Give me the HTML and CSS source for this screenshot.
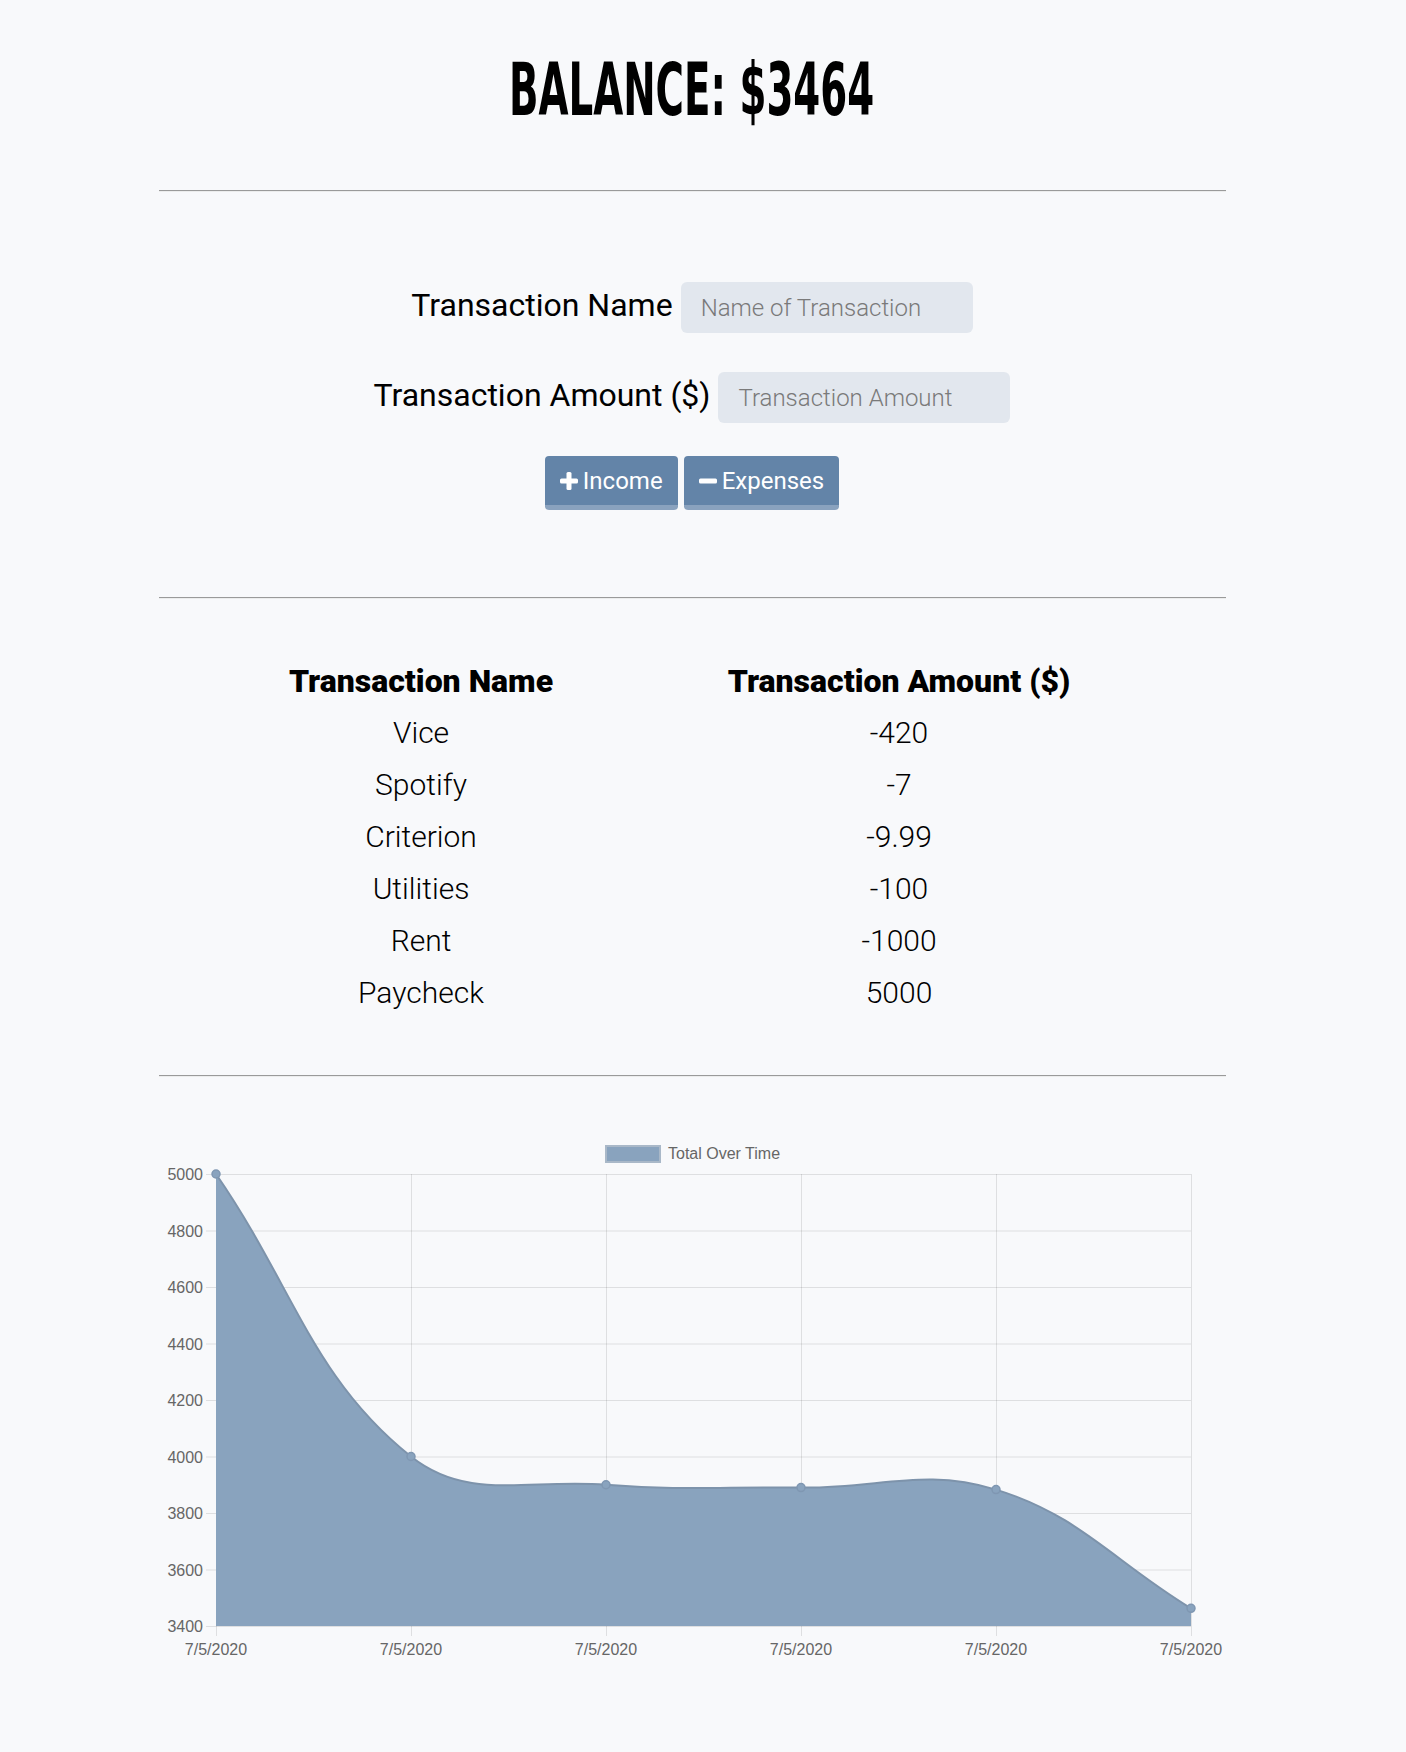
FILE: index.html
```html
<!DOCTYPE html>
<html lang="en">
<head>
<meta charset="utf-8">
<title>Budget Tracker</title>
<link rel="stylesheet" href="styles.css">
</head>
<body>
<div class="page">
  <h1 class="balance"><span class="balance-text">BALANCE: $3464</span></h1>
  <hr class="divider divider-top">
  <form class="entry">
    <div class="field">
      <label class="field-label" for="t-name">Transaction Name</label>
      <input class="field-input" id="t-name" type="text" placeholder="Name of Transaction">
    </div>
    <div class="field field-second">
      <label class="field-label" for="t-amount">Transaction Amount ($)</label>
      <input class="field-input" id="t-amount" type="text" placeholder="Transaction Amount">
    </div>
    <div class="actions">
      <button type="button" class="btn">
        <svg class="btn-icon" width="18" height="18" viewBox="0 0 18 18"><rect x="6.5" y="0" width="5" height="18" rx="1.5" fill="#fff"/><rect x="0" y="6.5" width="18" height="5" rx="1.5" fill="#fff"/></svg>
        <span>Income</span>
      </button>
      <button type="button" class="btn">
        <svg class="btn-icon" width="18" height="18" viewBox="0 0 18 18"><rect x="0" y="6.5" width="18" height="5" rx="1.5" fill="#fff"/></svg>
        <span>Expenses</span>
      </button>
    </div>
  </form>
  <hr class="divider divider-mid">
  <table class="ledger">
    <colgroup><col class="col-name"><col class="col-amount"></colgroup>
    <thead>
      <tr><th>Transaction Name</th><th>Transaction Amount ($)</th></tr>
    </thead>
    <tbody>
      <tr><td>Vice</td><td>-420</td></tr>
      <tr><td>Spotify</td><td>-7</td></tr>
      <tr><td>Criterion</td><td>-9.99</td></tr>
      <tr><td>Utilities</td><td>-100</td></tr>
      <tr><td>Rent</td><td>-1000</td></tr>
      <tr><td>Paycheck</td><td>5000</td></tr>
    </tbody>
  </table>
  <hr class="divider divider-bottom">
  <div class="chart">
    <svg class="chart-svg" width="1067" height="600" viewBox="158 1100 1067 600">
      <g class="legend">
        <rect x="605" y="1146" width="54" height="16" fill="#89a3be" stroke="#a9b8c8" stroke-width="2"/>
        <text x="667" y="1158.5" class="legend-text">Total Over Time</text>
      </g>
      <g class="grid" stroke="rgba(0,0,0,0.1)" stroke-width="1">
        <line x1="205" y1="1174.5" x2="1190" y2="1174.5"/>
        <line x1="205" y1="1231" x2="1190" y2="1231"/>
        <line x1="205" y1="1287.5" x2="1190" y2="1287.5"/>
        <line x1="205" y1="1344" x2="1190" y2="1344"/>
        <line x1="205" y1="1400.5" x2="1190" y2="1400.5"/>
        <line x1="205" y1="1457" x2="1190" y2="1457"/>
        <line x1="205" y1="1513.5" x2="1190" y2="1513.5"/>
        <line x1="205" y1="1570" x2="1190" y2="1570"/>
        <line x1="205" y1="1626.5" x2="1190" y2="1626.5"/>
        <line x1="215.5" y1="1174" x2="215.5" y2="1636"/>
        <line x1="410.5" y1="1174" x2="410.5" y2="1636"/>
        <line x1="605.5" y1="1174" x2="605.5" y2="1636"/>
        <line x1="800.5" y1="1174" x2="800.5" y2="1636"/>
        <line x1="995.5" y1="1174" x2="995.5" y2="1636"/>
        <line x1="1190.5" y1="1174" x2="1190.5" y2="1636"/>
      </g>
      <path class="area" d="M215,1174 C293,1287 310.9,1377.5 410,1456.5 C466.9,1501.8 526.6,1478.5 605,1484.75 C682.6,1490.9 722,1486.6 800,1487.6 C878,1488.6 923.1,1467.4 995,1489.6 C1079.1,1515.6 1112,1560.8 1190,1608.3 L1190,1626 L215,1626 Z" fill="#89a3be"/>
      <path class="line" d="M215,1174 C293,1287 310.9,1377.5 410,1456.5 C466.9,1501.8 526.6,1478.5 605,1484.75 C682.6,1490.9 722,1486.6 800,1487.6 C878,1488.6 923.1,1467.4 995,1489.6 C1079.1,1515.6 1112,1560.8 1190,1608.3" fill="none" stroke="#7d93ab" stroke-width="2"/>
      <g class="points" fill="#89a3be" stroke="#7f97b2" stroke-width="1.5">
        <circle cx="215" cy="1174" r="4"/>
        <circle cx="410" cy="1456.5" r="4"/>
        <circle cx="605" cy="1484.75" r="4"/>
        <circle cx="800" cy="1487.6" r="4"/>
        <circle cx="995" cy="1489.6" r="4"/>
        <circle cx="1190" cy="1608.3" r="4"/>
      </g>
      <g class="ticks-y">
        <text x="202" y="1180">5000</text>
        <text x="202" y="1236.5">4800</text>
        <text x="202" y="1293">4600</text>
        <text x="202" y="1349.5">4400</text>
        <text x="202" y="1406">4200</text>
        <text x="202" y="1462.5">4000</text>
        <text x="202" y="1519">3800</text>
        <text x="202" y="1575.5">3600</text>
        <text x="202" y="1632">3400</text>
      </g>
      <g class="ticks-x">
        <text x="215" y="1655">7/5/2020</text>
        <text x="410" y="1655">7/5/2020</text>
        <text x="605" y="1655">7/5/2020</text>
        <text x="800" y="1655">7/5/2020</text>
        <text x="995" y="1655">7/5/2020</text>
        <text x="1190" y="1655">7/5/2020</text>
      </g>
    </svg>
  </div>
</div>
</body>
</html>
```

FILE: styles.css
```css
html, body {
  margin: 0;
  padding: 0;
  background: #f8f9fb;
}

body {
  font-family: Roboto, "Liberation Sans", sans-serif;
  color: #000;
}

.page {
  width: 1384px;
  min-height: 1752px;
}

.balance {
  margin: 53px 0 0;
  font-size: 73px;
  line-height: 73px;
  height: 73px;
  text-align: center;
  font-family: "Liberation Sans Narrow", "DejaVu Sans Condensed", "Liberation Sans", sans-serif;
  font-weight: 700;
}

.balance-text {
  display: inline-block;
  transform: scaleX(0.59);
  transform-origin: center;
  white-space: nowrap;
}

.divider {
  width: 1067px;
  height: 0;
  margin: 0 auto;
  border: none;
  border-top: 1px solid #9a9a9a;
  border-bottom: 1px solid #eceded;
}

.divider-top { margin-top: 64px; }
.divider-mid { margin-top: 87px; }
.divider-bottom { margin-top: 56px; }

.entry {
  margin-top: 90px;
  display: flex;
  flex-direction: column;
  align-items: center;
}

.field {
  display: flex;
  align-items: baseline;
  gap: 8px;
}

.field-second {
  margin-top: 39px;
}

.field-label {
  font-size: 32px;
  font-weight: 400;
}

.field-input {
  box-sizing: border-box;
  width: 292px;
  height: 51px;
  border: none;
  border-radius: 6px;
  background: #e2e7ee;
  padding: 0 20px;
  font-family: "Roboto Light", Roboto, "Liberation Sans", sans-serif;
  font-weight: 300;
  font-size: 24px;
  color: #333;
  outline: none;
}

.field-input::placeholder {
  color: #7a7a7a;
}

.actions {
  margin-top: 33px;
  display: flex;
  gap: 6px;
}

.btn {
  box-sizing: border-box;
  height: 54px;
  display: inline-flex;
  align-items: center;
  gap: 5px;
  padding: 0 15px 0 15px;
  border: none;
  border-bottom: 5px solid #8aa2be;
  border-radius: 4px;
  background: #6384a8;
  color: #fff;
  font-family: Roboto, "Liberation Sans", sans-serif;
  font-size: 24px;
  font-weight: 400;
  cursor: pointer;
}

.btn-icon {
  display: block;
  flex: none;
}

.ledger {
  width: 956px;
  margin: 56px auto 0;
  border-collapse: collapse;
  table-layout: fixed;
}

.col-name { width: 414px; }
.col-amount { width: 542px; }

.ledger th,
.ledger td {
  padding: 0;
  text-align: center;
  height: 52px;
  line-height: 52px;
}

.ledger th {
  font-size: 32px;
  font-weight: 900;
}

.ledger td {
  font-family: "Roboto Light", Roboto, "Liberation Sans", sans-serif;
  font-size: 30px;
  font-weight: 300;
}

.chart {
  margin-top: 23px;
  display: flex;
  justify-content: center;
}

.chart-svg {
  display: block;
  font-family: "Liberation Sans", Arial, sans-serif;
  font-size: 16px;
}

.chart-svg text {
  fill: #666;
}

.ticks-y text {
  text-anchor: end;
}

.ticks-x text {
  text-anchor: middle;
}
```
